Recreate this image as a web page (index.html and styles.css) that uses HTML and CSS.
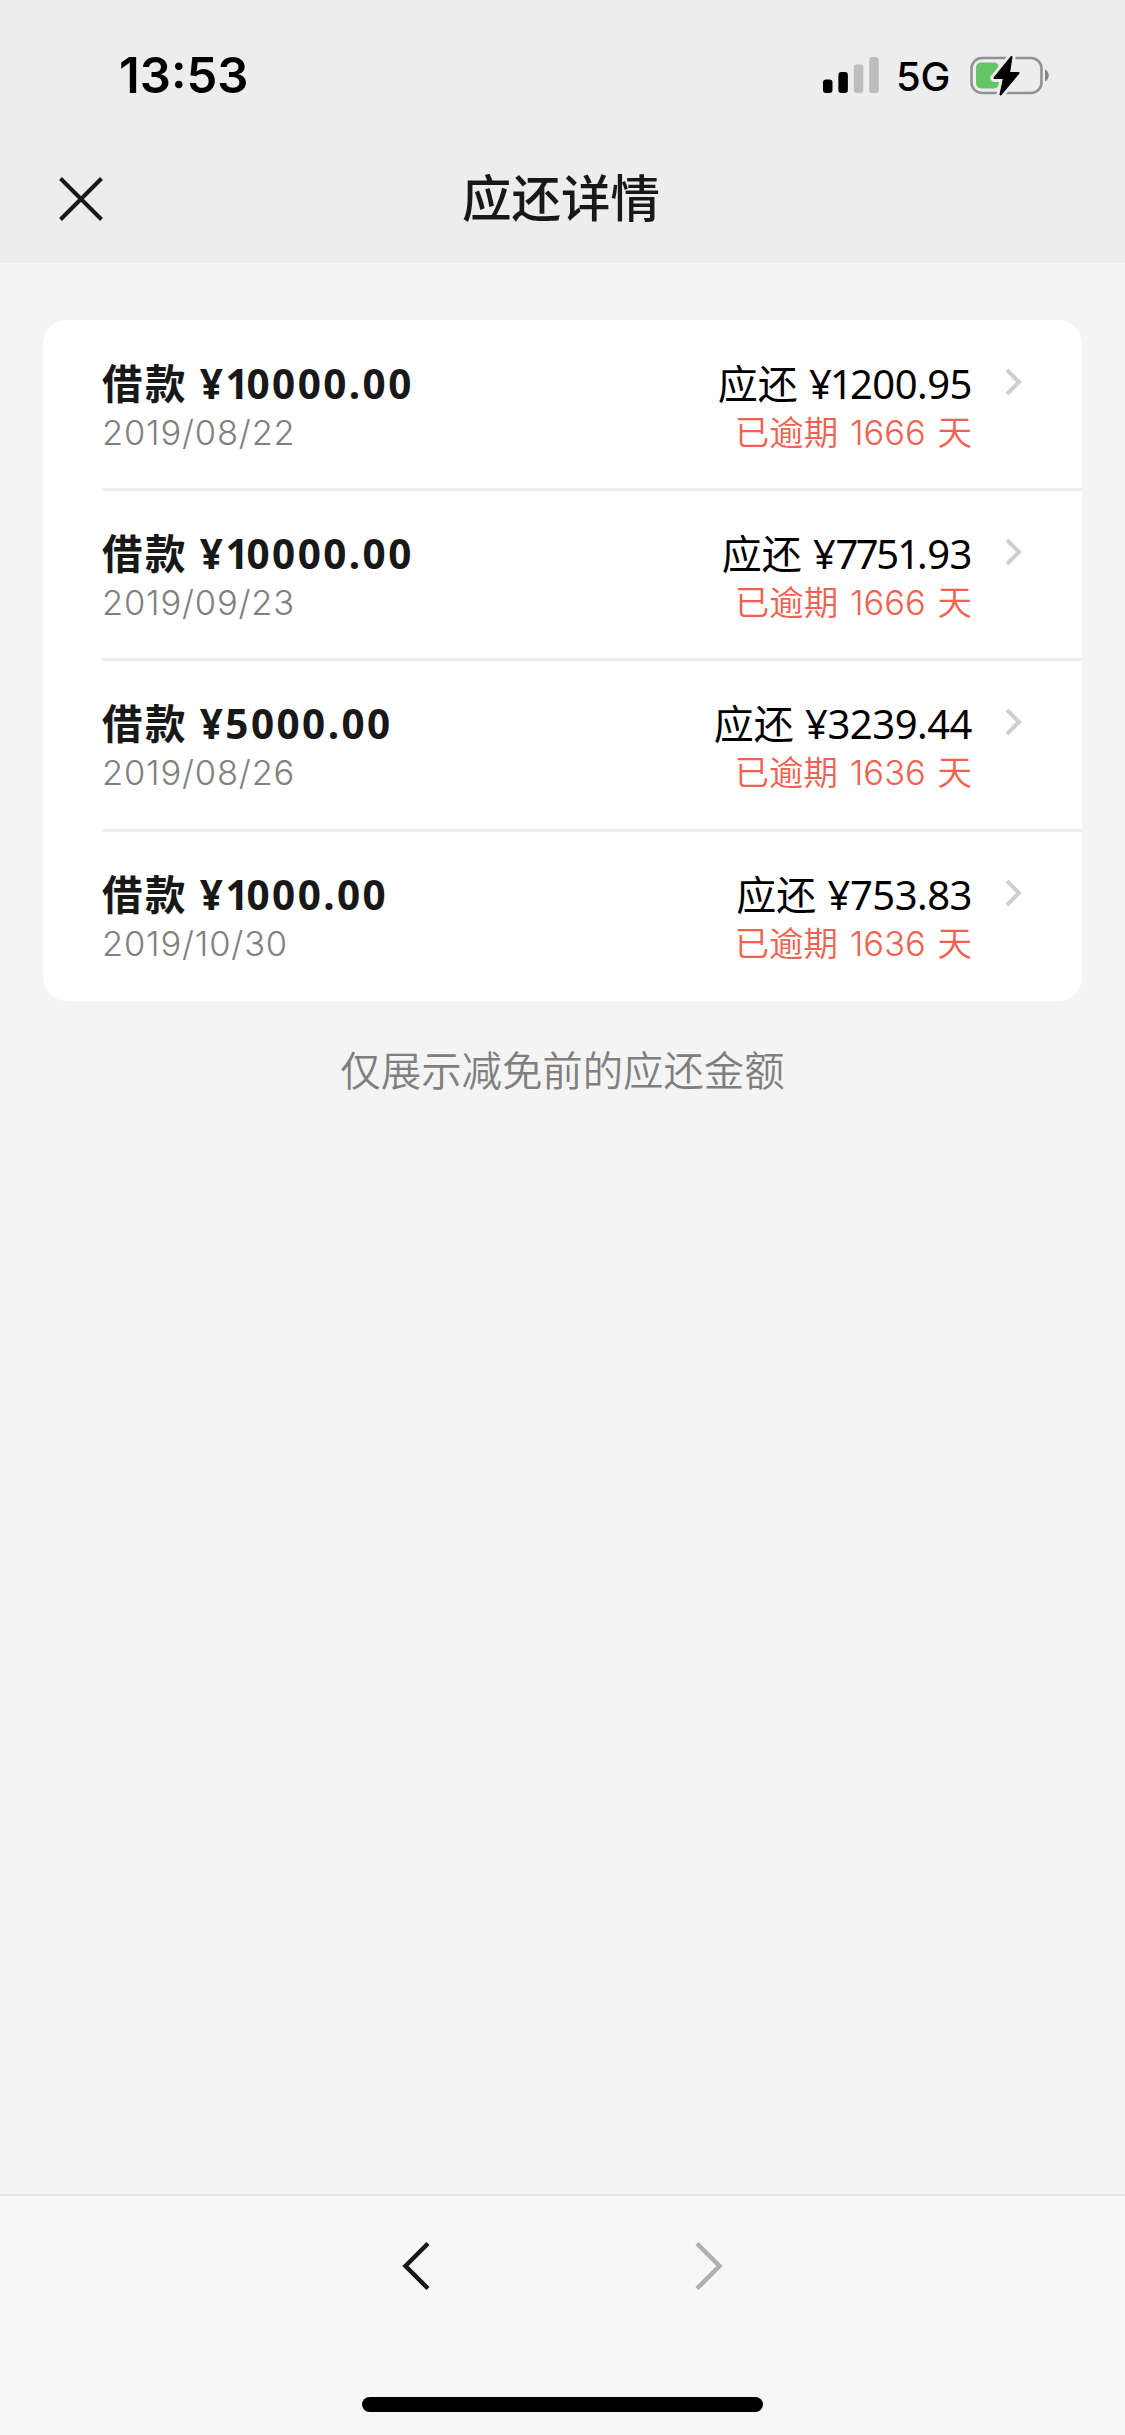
FILE: index.html
```html
<!DOCTYPE html>
<html lang="zh-CN">
<head>
<meta charset="utf-8">
<title>应还详情</title>
<link rel="stylesheet" href="styles.css">
</head>
<body>
<div class="screen">
  <header class="header">
    <div class="status">
      <span class="time">13:53</span>
      <div class="indicators">
        <svg class="signal" width="56" height="36" viewBox="0 0 56 36">
          <rect x="0" y="22.500" width="9.500" height="13.500" rx="3"/>
          <rect x="15.400" y="15" width="9.500" height="21" rx="3"/>
          <rect class="off" x="30.800" y="7.500" width="9.500" height="28.500" rx="3"/>
          <rect class="off" x="46.200" y="0" width="9.500" height="36" rx="3"/>
        </svg>
        <span class="network">5G</span>
        <svg class="battery" width="80" height="42" viewBox="0 0 80 42">
          <rect class="shell" x="1.500" y="4" width="70" height="35" rx="10.500"/>
          <path class="nub" d="M75 15.500c5 2 5 10 0 12z"/>
          <rect class="charge" x="6" y="8.500" width="23" height="26" rx="5"/>
          <path class="bolt-gap" d="M41.500 3 24.500 24h9.500l-3.500 16.500L48.500 19h-9.500z"/>
          <path class="bolt" d="M41.500 3 24.500 24h9.500l-3.500 16.500L48.500 19h-9.500z"/>
        </svg>
      </div>
    </div>
    <div class="titlebar">
      <svg class="close" width="46" height="46" viewBox="0 0 46 46"><path d="M2.500 2.500l41 41M43.500 2.500l-41 41"/></svg>
      <h1 class="title">应还详情</h1>
    </div>
  </header>

  <main class="content">
    <ul class="card">
      <li class="row">
        <div class="loan"><p class="principal">借款 <span class="money">¥<i>1</i>0000.00</span></p><p class="date">2019/08/22</p></div>
        <div class="due"><p class="amount">应还 <span class="money">¥<i>1</i>200.95</span></p><p class="overdue">已逾期 <span class="days">1666</span> 天</p></div>
        <svg class="arrow" width="18" height="28" viewBox="0 0 18 28"><path d="M2 2l12 12L2 26"/></svg>
      </li>
      <li class="row">
        <div class="loan"><p class="principal">借款 <span class="money">¥<i>1</i>0000.00</span></p><p class="date">2019/09/23</p></div>
        <div class="due"><p class="amount">应还 <span class="money">¥<b>77</b>5<i>1</i>.93</span></p><p class="overdue">已逾期 <span class="days">1666</span> 天</p></div>
        <svg class="arrow" width="18" height="28" viewBox="0 0 18 28"><path d="M2 2l12 12L2 26"/></svg>
      </li>
      <li class="row">
        <div class="loan"><p class="principal">借款 <span class="money">¥5000.00</span></p><p class="date">2019/08/26</p></div>
        <div class="due"><p class="amount">应还 <span class="money">¥3239.44</span></p><p class="overdue">已逾期 <span class="days">1636</span> 天</p></div>
        <svg class="arrow" width="18" height="28" viewBox="0 0 18 28"><path d="M2 2l12 12L2 26"/></svg>
      </li>
      <li class="row">
        <div class="loan"><p class="principal">借款 <span class="money">¥<i>1</i>000.00</span></p><p class="date">2019/10/30</p></div>
        <div class="due"><p class="amount">应还 <span class="money">¥753.83</span></p><p class="overdue">已逾期 <span class="days">1636</span> 天</p></div>
        <svg class="arrow" width="18" height="28" viewBox="0 0 18 28"><path d="M2 2l12 12L2 26"/></svg>
      </li>
    </ul>
    <p class="note">仅展示减免前的应还金额</p>
  </main>

  <footer class="toolbar">
    <nav class="history">
      <svg width="30" height="50" viewBox="0 0 30 50"><path d="M26 2.500L3.500 25 26 47.500"/></svg>
      <svg class="disabled" width="30" height="50" viewBox="0 0 30 50"><path d="M4 2.500L26.500 25 4 47.500"/></svg>
    </nav>
    <div class="home"></div>
  </footer>
</div>
</body>
</html>
```
FILE: styles.css
```css
* { box-sizing: border-box; margin: 0; padding: 0; }

body {
  background: #f4f4f4;
  color: #181818;
  font-family: "Inter", "Noto Sans CJK SC", sans-serif;
}

.screen { width: 1125px; height: 2435px; display: flex; flex-direction: column; overflow: hidden; }

.header { height: 263px; background: #ededed; }

.status {
  height: 136px;
  padding: 14px 75px 0 119px;
  display: flex;
  align-items: center;
  justify-content: space-between;
  color: #000;
}
.time { font-size: 49px; font-weight: 600; line-height: 60px; padding-top: 1px; }
.indicators { display: flex; align-items: center; }
.network { font-size: 40px; font-weight: 500; line-height: 48px; margin: 3px 20px 0 17px; letter-spacing: -0.3px; }
.signal { fill: #000; }
.signal .off { fill: #bdbdbd; }
.battery { margin-bottom: 1px; }
.shell { fill: none; stroke: #929292; stroke-width: 2.6; }
.nub { fill: #868686; }
.charge { fill: #65c466; }
.bolt-gap { fill: #ededed; stroke: #ededed; stroke-width: 8; stroke-linejoin: round; }
.bolt { fill: #000; stroke: #000; stroke-width: 2; stroke-linejoin: round; }

.titlebar {
  height: 126px;
  display: grid;
  grid-template-columns: 200px 1fr 203px;
  align-items: center;
}
.close { margin-left: 58px; fill: none; stroke: #181818; stroke-width: 4; }
.title { text-align: center; font-size: 49.5px; font-weight: 500; line-height: 72px; }

.content { flex: 1; padding: 57px 43px 0; }
.card { height: 681px; background: #fff; border-radius: 24px; list-style: none; padding-left: 59px; }
.row {
  height: 170.4px;
  padding: 40px 59px 0 0;
  display: flex;
  align-items: flex-start;
}
.row:first-child { height: 168px; padding-top: 41px; }
.row + .row { border-top: 3px solid #efefef; }
.loan { flex: 1; }
.principal, .amount { height: 48px; line-height: 45px; white-space: pre; }
.principal { font-size: 40.5px; font-weight: 700; letter-spacing: 2.4px; }
.money { font-family: "Noto Sans", sans-serif; }
.money i { font-style: normal; letter-spacing: 0; margin-right: -2px; }
.date, .overdue { height: 48px; line-height: 48px; font-size: 34.5px; font-weight: 300; }
.date { color: #808080; letter-spacing: 0.8px; }
.due { text-align: right; margin-right: 33px; }
.amount { font-size: 40px; font-weight: 400; color: #000; }
.amount .money { letter-spacing: -0.5px; }
.amount .money i { margin: 0 -3px 0 -1.5px; }
.amount .money b { font-weight: inherit; letter-spacing: -2.5px; }
.overdue { color: #f0614f; white-space: pre; font-weight: 350; word-spacing: 2px; }
.days { font-weight: 300; }
.arrow { margin-top: 7px; fill: none; stroke: #cfcfcf; stroke-width: 4; }

.note { margin-top: 41px; text-align: center; font-size: 40.4px; line-height: 60px; font-weight: 350; color: #7f7f7f; }

.toolbar { height: 241px; background: #f7f7f7; border-top: 2px solid #e4e4e4; display: flex; flex-direction: column; align-items: center; }
.history { margin-top: 45px; width: 321px; display: flex; justify-content: space-between; fill: none; stroke: #181818; stroke-width: 4.5; }
.history .disabled { stroke: #b0b0b0; }
.home { margin-top: 106px; width: 401px; height: 15px; border-radius: 8px; background: #000; }
```
